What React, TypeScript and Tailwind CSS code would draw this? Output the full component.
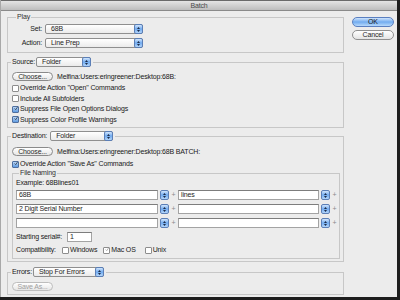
import React from 'react';

function Stepper() {
  return (
    <div className="w-[9px] h-[10px] shrink-0 rounded-[2px] border border-[#5b7fb7] bg-linear-to-b from-[#d2e6fc] via-[#6fa9ee] to-[#b4d6fa] flex flex-col items-center justify-center gap-[1px]">
      <svg width="3" height="2" viewBox="0 0 3 2"><path d="M1.5 0L3 2H0z" fill="#1c2c48" /></svg>
      <svg width="3" height="2" viewBox="0 0 3 2"><path d="M0 0H3L1.5 2z" fill="#1c2c48" /></svg>
    </div>
  );
}

function Popup({ value, w }: { value: string; w: string }) {
  return (
    <div className={`${w} h-[10px] flex items-center rounded-[2px] border border-[#8f8f8f] bg-linear-to-b from-white to-[#ebebeb]`}>
      <span className="flex-1 pl-[5px] text-[7px] leading-[8px] text-[#1e1e1e]">{value}</span>
      <div className="-mr-[1px]">
        <Stepper />
      </div>
    </div>
  );
}

function Field({ w, value = '' }: { w: string; value?: string }) {
  return (
    <div className={`${w} h-[10px] shrink-0 bg-white border border-[#a3a3a3] border-t-[#7d7d7d] pl-[2px] text-[7px] leading-[8px] text-[#1e1e1e]`}>
      {value}
    </div>
  );
}

function Check({ checked = false, gray = false }: { checked?: boolean; gray?: boolean }) {
  const blue = checked && !gray;
  return (
    <div
      className={`w-[7px] h-[7px] shrink-0 rounded-[1px] border flex items-center justify-center ${
        blue ? 'border-[#4f6f9f] bg-linear-to-b from-[#b9d6f7] to-[#5f9be0]' : 'border-[#8d8d8d] bg-white'
      }`}
    >
      {checked && (
        <svg width="7" height="7" viewBox="0 0 7 7" className="-mt-[2px] ml-[1px]">
          <path d="M1 3.5L3 5.5L6.5 0.5" stroke={gray ? '#8a8a8a' : '#1a1a1a'} strokeWidth="1.1" fill="none" />
        </svg>
      )}
    </div>
  );
}

function CheckRow({ label, checked = false }: { label: string; checked?: boolean }) {
  return (
    <div className="h-[10.5px] flex items-center gap-[1px]">
      <Check checked={checked} />
      <span className="text-[7px] leading-[8px]">{label}</span>
    </div>
  );
}

function PillButton({ label, disabled = false }: { label: string; disabled?: boolean }) {
  return (
    <div
      className={`w-[41px] h-[9px] shrink-0 rounded-full border bg-linear-to-b from-white to-[#e6e6e6] flex items-center justify-center text-[7px] leading-[8px] ${
        disabled ? 'border-[#bdbdbd] text-[#a0a0a0]' : 'border-[#8a8a8a] text-[#2a2a2a]'
      }`}
    >
      {label}
    </div>
  );
}

function NamingRow({ left = '', right = '' }: { left?: string; right?: string }) {
  return (
    <div className="flex items-center">
      <Field w="w-[142px]" value={left} />
      <div className="ml-[2px]">
        <Stepper />
      </div>
      <span className="w-[9px] text-center text-[7px] leading-[8px] text-[#8a8a8a]">+</span>
      <Field w="w-[141px]" value={right} />
      <div className="ml-[2px]">
        <Stepper />
      </div>
      <span className="w-[9px] text-center text-[7px] leading-[8px] text-[#8a8a8a]">+</span>
    </div>
  );
}

export default function App() {
  return (
    <div className="w-[400px] h-[300px] bg-[#1d1d1d] overflow-hidden font-['Liberation_Sans',Arial,sans-serif] tracking-[-0.15px] text-[#202020]">
      <div className="w-[397px] h-[297px] bg-[#ececec] flex flex-col border-l border-[#a8a8a8]">
        {/* Title bar */}
        <div className="h-[11px] shrink-0 bg-linear-to-b from-[#e4e4e4] to-[#bdbdbd] border-t border-t-[#6a6a6a] border-b border-b-[#8a8a8a] flex items-center justify-center">
          <span className="text-[7px] leading-[8px] text-[#4a4a4a]">Batch</span>
        </div>

        <div className="flex flex-1 pl-[6px]">
          {/* Left column */}
          <div className="w-[337px] flex flex-col">
            {/* Play */}
            <fieldset className="mt-[2px] border border-[#c7c7c7]">
              <legend className="ml-[8px] px-[1px] text-[7px] leading-[8px] text-[#333]">Play</legend>
              <div className="pt-[3px] pb-[4px] flex flex-col gap-[4px]">
                <div className="flex items-center">
                  <span className="w-[35px] text-right pr-[1px] text-[7px] leading-[8px]">Set:</span>
                  <div className="ml-[2px]">
                    <Popup value="68B" w="w-[98px]" />
                  </div>
                </div>
                <div className="flex items-center">
                  <span className="w-[35px] text-right pr-[1px] text-[7px] leading-[8px]">Action:</span>
                  <div className="ml-[2px]">
                    <Popup value="Line Prep" w="w-[98px]" />
                  </div>
                </div>
              </div>
            </fieldset>

            {/* Source */}
            <fieldset className="mt-[4px] border border-[#c7c7c7]">
              <legend className="ml-[3px] pl-[1px] pr-[2px]">
                <div className="flex items-center h-[10px]">
                  <span className="text-[7px] leading-[8px]">Source:</span>
                  <div className="ml-[1px]">
                    <Popup value="Folder" w="w-[55px]" />
                  </div>
                </div>
              </legend>
              <div className="pl-[4px] pt-[5px] pb-[2px]">
                <div className="flex items-center">
                  <PillButton label="Choose..." />
                  <span className="ml-[4px] text-[7px] leading-[8px]">Melfina:Users:eringreener:Desktop:68B:</span>
                </div>
                <div className="mt-[2px]">
                  <CheckRow label={'Override Action "Open" Commands'} />
                  <CheckRow label="Include All Subfolders" />
                  <CheckRow label="Suppress File Open Options Dialogs" checked />
                  <CheckRow label="Suppress Color Profile Warnings" checked />
                </div>
              </div>
            </fieldset>

            {/* Destination */}
            <fieldset className="mt-[3px] border border-[#c7c7c7]">
              <legend className="ml-[3px] pl-[1px] pr-[2px]">
                <div className="flex items-center h-[10px]">
                  <span className="text-[7px] leading-[8px]">Destination:</span>
                  <div className="ml-[3px]">
                    <Popup value="Folder" w="w-[63px]" />
                  </div>
                </div>
              </legend>
              <div className="pl-[4px] pt-[6px] pb-[2px]">
                <div className="flex items-center">
                  <PillButton label="Choose..." />
                  <span className="ml-[4px] text-[7px] leading-[8px]">Melfina:Users:eringreener:Desktop:68B BATCH:</span>
                </div>
                <div className="mt-[3px] h-[10px] flex items-center gap-[1px]">
                  <Check checked />
                  <span className="text-[7px] leading-[8px]">Override Action "Save As" Commands</span>
                </div>

                {/* File Naming */}
                <fieldset className="w-[328px] border border-[#c7c7c7]">
                  <legend className="ml-[6px] px-[1px] text-[7px] leading-[8px] text-[#333]">File Naming</legend>
                  <div className="pl-[3px] pb-[3px]">
                    <div className="mt-[1px] h-[10px] flex items-center text-[7px] leading-[8px]">Example: 68Blines01</div>
                    <div className="mt-[2px] flex flex-col gap-[4px]">
                      <NamingRow left="68B" right="lines" />
                      <NamingRow left="2 Digit Serial Number" />
                      <NamingRow />
                    </div>
                    <div className="mt-[4px] flex items-center">
                      <span className="text-[7px] leading-[8px]">Starting serial#:</span>
                      <div className="ml-[5px]">
                        <Field w="w-[25px]" value="1" />
                      </div>
                    </div>
                    <div className="mt-[3px] h-[10px] flex items-center text-[7px] leading-[8px]">
                      <span>Compatibility:</span>
                      <div className="ml-[6px] flex items-center gap-[1px]">
                        <Check />
                        <span>Windows</span>
                      </div>
                      <div className="ml-[6px] flex items-center gap-[1px]">
                        <Check checked gray />
                        <span>Mac OS</span>
                      </div>
                      <div className="ml-[9px] flex items-center gap-[1px]">
                        <Check />
                        <span>Unix</span>
                      </div>
                    </div>
                  </div>
                </fieldset>
              </div>
            </fieldset>

            {/* Errors */}
            <fieldset className="mt-[5px] border border-[#c7c7c7]">
              <legend className="ml-[3px] pl-[1px] pr-[2px]">
                <div className="flex items-center h-[10px]">
                  <span className="text-[7px] leading-[8px]">Errors:</span>
                  <div className="ml-[1px]">
                    <Popup value="Stop For Errors" w="w-[71px]" />
                  </div>
                </div>
              </legend>
              <div className="pl-[4px] pt-[5px] pb-[3px]">
                <PillButton label="Save As..." disabled />
              </div>
            </fieldset>
          </div>

          {/* Right column */}
          <div className="ml-[8px] w-[42px] pt-[6px] flex flex-col gap-[3px]">
            <div className="h-[10px] rounded-full border border-[#5a7fc0] bg-linear-to-b from-[#cfe4fc] via-[#72acef] to-[#b7d9fb] flex items-center justify-center text-[7px] leading-[8px] text-[#1a1a1a]">
              OK
            </div>
            <div className="h-[10px] rounded-full border border-[#8f8f8f] bg-linear-to-b from-white to-[#e4e4e4] flex items-center justify-center text-[7px] leading-[8px] text-[#2a2a2a]">
              Cancel
            </div>
          </div>
        </div>
      </div>
    </div>
  );
}
